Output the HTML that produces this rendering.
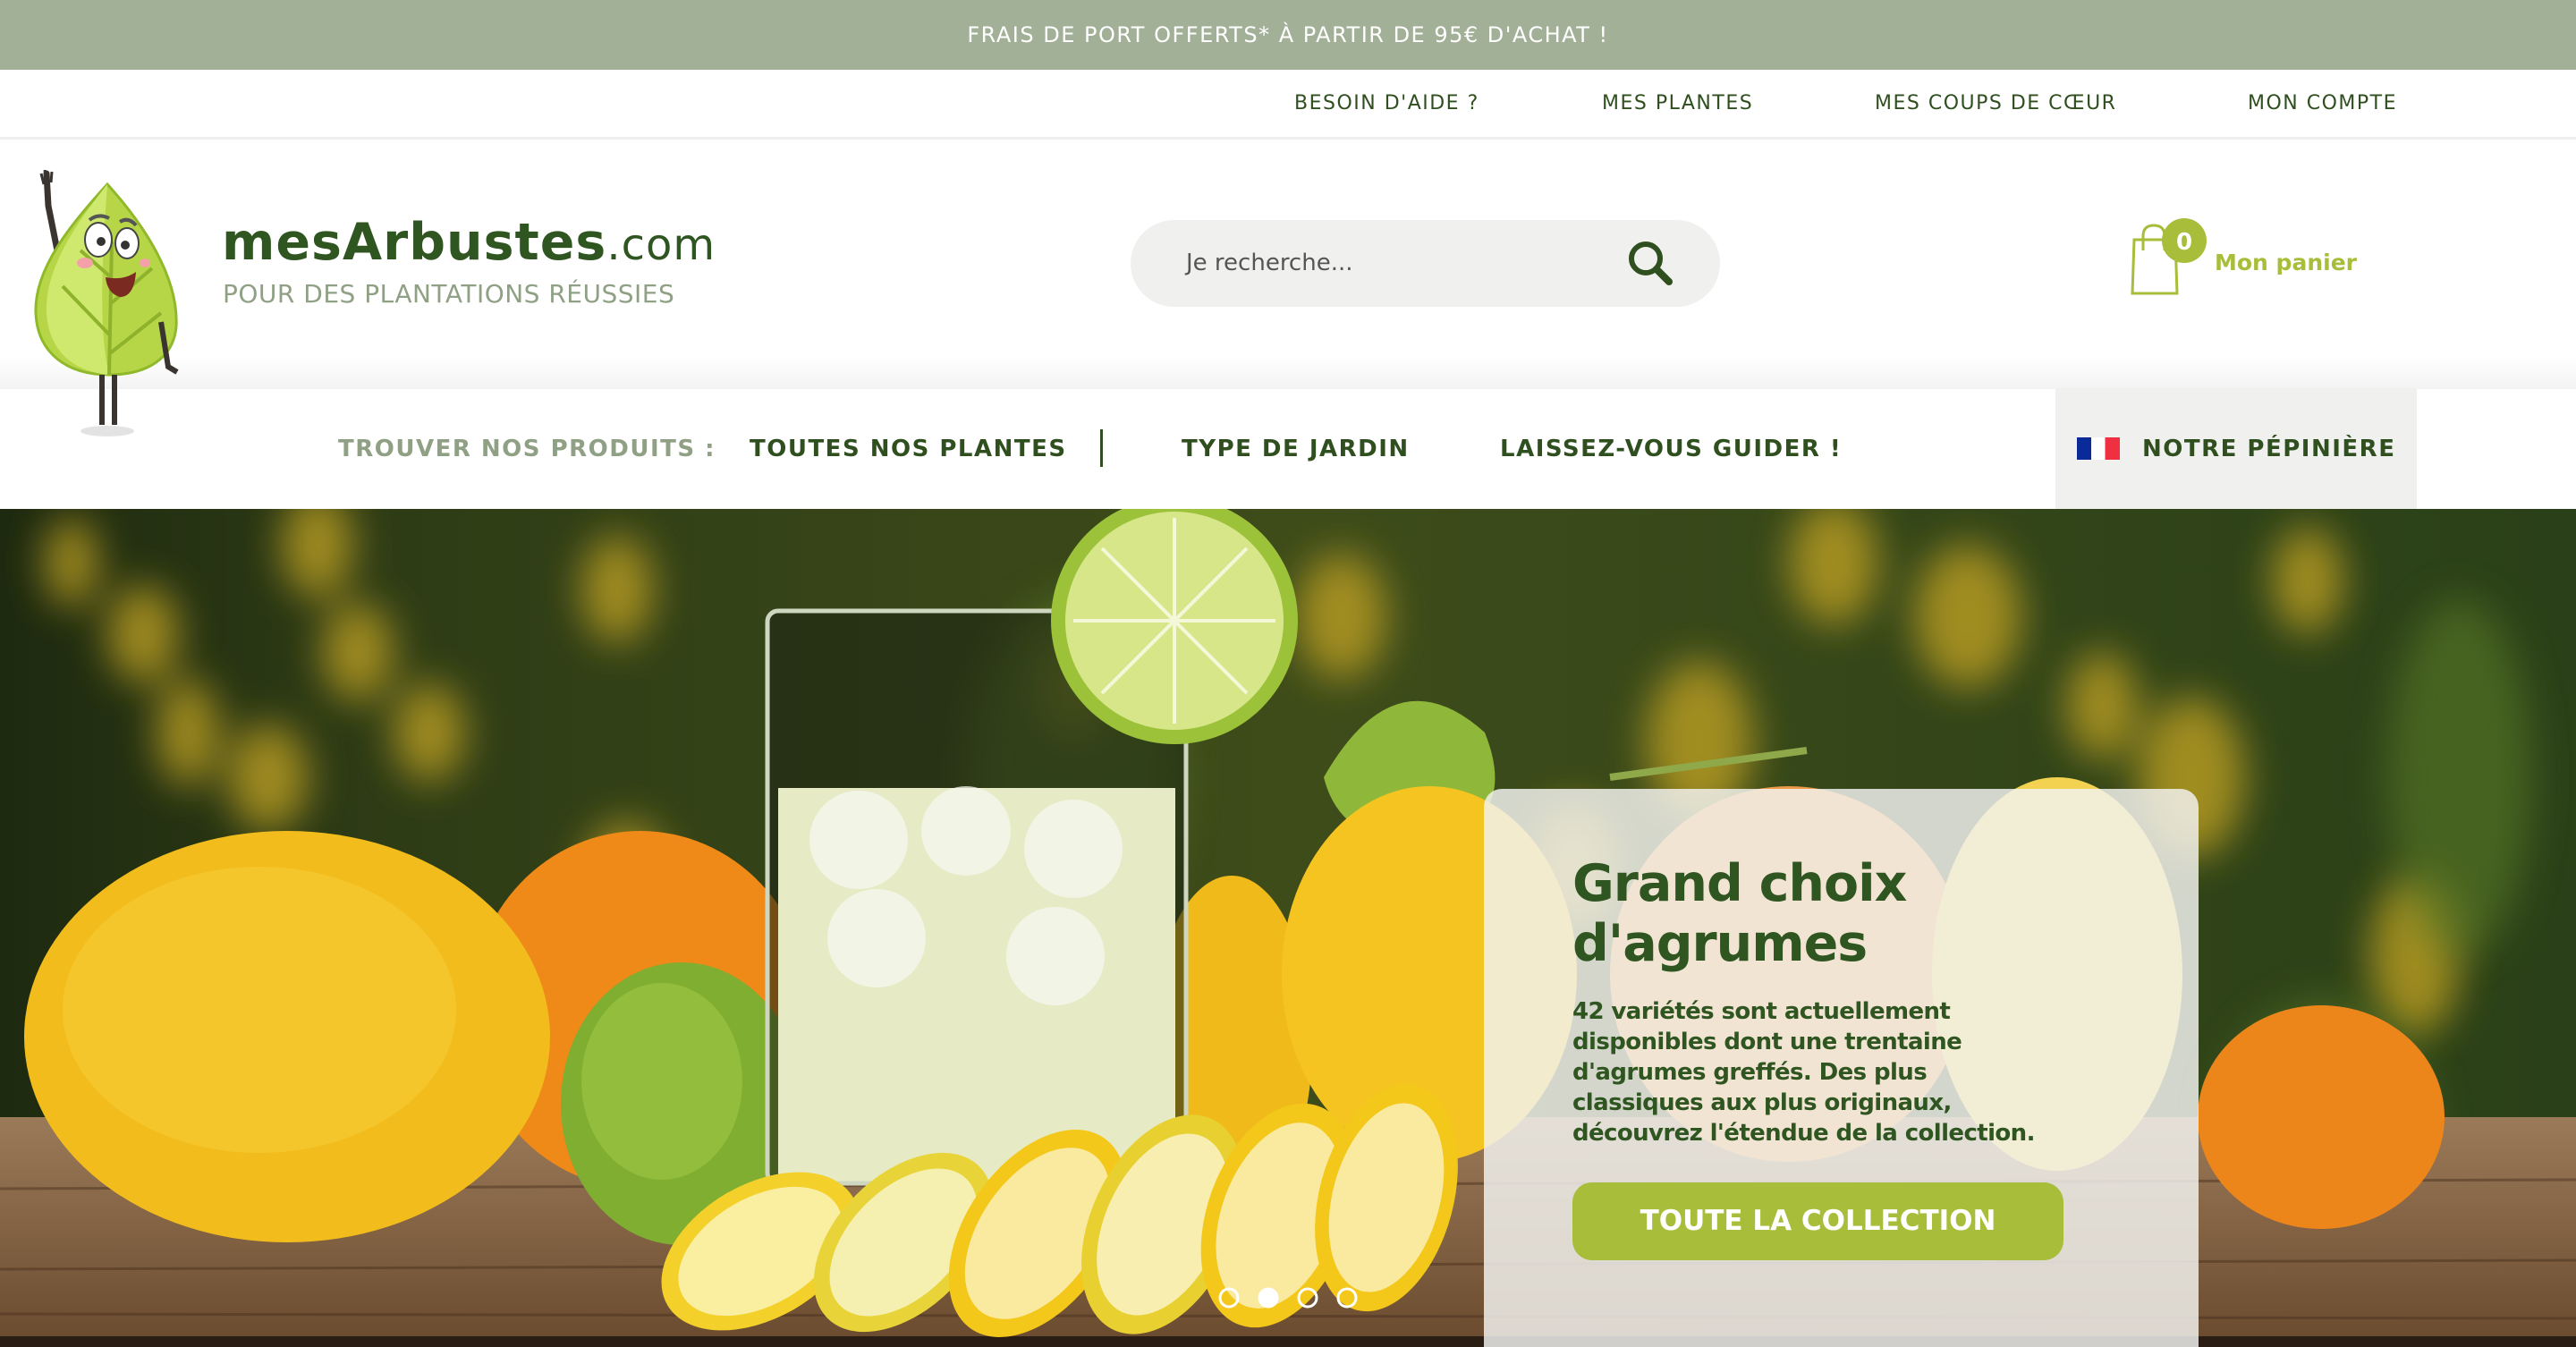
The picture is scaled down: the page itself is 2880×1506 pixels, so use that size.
<!DOCTYPE html>
<html><head><meta charset="utf-8"><style>
*{margin:0;padding:0;box-sizing:border-box}
body{width:2880px;height:1506px;overflow:hidden;background:#fff;font-family:"DejaVu Sans","Liberation Sans",sans-serif;position:relative}
.a{position:absolute;white-space:nowrap}
.topbar{left:0;top:0;width:2880px;height:78px;background:#a3b098;color:#fff;font-size:24px;letter-spacing:1.5px;text-align:center;line-height:78px}
.nav2{top:103px;font-size:22px;letter-spacing:1.5px;color:#2f4f1f}
.line{left:0;top:153px;width:2880px;height:3px;background:#efefef}
.mn{top:487px;font-size:26px;font-weight:bold;color:#2f4f1f;letter-spacing:1.5px}
</style></head><body>
<div class="a topbar">FRAIS DE PORT OFFERTS* À PARTIR DE 95€ D'ACHAT !</div>
<div class="a nav2" style="left:1447px">BESOIN D'AIDE ?</div>
<div class="a nav2" style="left:1791px">MES PLANTES</div>
<div class="a nav2" style="left:2096px">MES COUPS DE CŒUR</div>
<div class="a nav2" style="left:2513px">MON COMPTE</div>
<div class="a line"></div>
<div class="a" style="left:0;top:400px;width:2880px;height:35px;background:linear-gradient(#fff,#f3f3f3)"></div>

<!-- logo mascot -->
<svg class="a" style="left:30px;top:190px" width="200" height="300" viewBox="0 0 200 300">
<ellipse cx="90" cy="292" rx="30" ry="6" fill="#e3e3e3"/>
<path d="M22 4 L24 40 L40 120 L56 150" stroke="#3a3430" stroke-width="7" fill="none" stroke-linecap="round"/>
<path d="M20 0 L22 14 M28 2 L27 14 M16 4 L19 16" stroke="#3a3430" stroke-width="3"/>
<path d="M90 16 C130 60 170 120 167 175 C164 210 135 229 92 229 C45 229 12 205 10 160 C8 110 50 60 90 16 Z" fill="#b6d648" stroke="#8fb92a" stroke-width="3"/>
<path d="M90 16 C55 60 20 110 22 160 C25 205 55 226 92 229 C80 180 84 100 90 16Z" fill="#cfe96e"/>
<path d="M92 229 L95 80 M93 185 L40 130 M93 150 L140 110 M93 205 L150 160 M94 120 L60 90" stroke="#8eb22c" stroke-width="4" fill="none"/>
<path d="M150 170 L158 220 L168 226" stroke="#3a3430" stroke-width="6" fill="none"/>
<path d="M84 229 L84 285 M98 229 L98 285" stroke="#3a3430" stroke-width="6"/>
<ellipse cx="80" cy="78" rx="15" ry="19" fill="#fff" stroke="#444" stroke-width="2"/>
<ellipse cx="112" cy="82" rx="13" ry="17" fill="#fff" stroke="#444" stroke-width="2"/>
<circle cx="83" cy="80" r="5" fill="#333"/><circle cx="110" cy="84" r="5" fill="#333"/>
<ellipse cx="65" cy="104" rx="9" ry="6" fill="#f4a0a8"/><ellipse cx="132" cy="104" rx="6" ry="5" fill="#f4a0a8"/>
<path d="M88 120 Q108 124 122 114 Q120 142 104 142 Q90 138 88 120Z" fill="#7a2a20"/>
<path d="M70 56 Q80 48 92 54 M104 58 Q114 52 122 62" stroke="#555" stroke-width="4" fill="none"/>
</svg>
<div class="a" style="left:248px;top:238px;font-size:57px;font-weight:bold;color:#2f5520;letter-spacing:1px">mesArbustes<span style="font-weight:normal;font-size:48px">.com</span></div>
<div class="a" style="left:249px;top:312px;font-size:28px;color:#8fa085;letter-spacing:0.5px">POUR DES PLANTATIONS RÉUSSIES</div>

<!-- search -->
<div class="a" style="left:1264px;top:246px;width:659px;height:97px;border-radius:49px;background:#f0f1ee"></div>
<div class="a" style="left:1326px;top:279px;font-size:26px;color:#555">Je recherche...</div>
<svg class="a" style="left:1816px;top:265px" width="58" height="58" viewBox="0 0 58 58"><circle cx="24" cy="24" r="16" stroke="#2f4f1f" stroke-width="6" fill="none"/><path d="M36 36 L50 50" stroke="#2f4f1f" stroke-width="8" stroke-linecap="round"/></svg>

<!-- cart -->
<svg class="a" style="left:2380px;top:240px" width="100" height="100" viewBox="0 0 100 100">
<path d="M6 28 L4 88 L54 88 L52 28 Z" fill="none" stroke="#a8bd3a" stroke-width="3"/>
<path d="M16 40 L16 24 Q16 12 28 12 Q40 12 40 24 L40 40" fill="none" stroke="#a8bd3a" stroke-width="3"/>
<circle cx="62" cy="29" r="25" fill="#a8bd3a"/>
<text x="62" y="39" font-size="26" font-weight="bold" fill="#fff" text-anchor="middle" font-family="DejaVu Sans">0</text>
</svg>
<div class="a" style="left:2476px;top:279px;font-size:25px;font-weight:bold;color:#a8bd3a">Mon panier</div>

<!-- main nav -->
<div class="a mn" style="left:378px;color:#8fa085">TROUVER NOS PRODUITS :</div>
<div class="a mn" style="left:838px">TOUTES NOS PLANTES</div>
<div class="a" style="left:1230px;top:480px;width:3px;height:42px;background:#2f4f1f"></div>
<div class="a mn" style="left:1321px">TYPE DE JARDIN</div>
<div class="a mn" style="left:1677px">LAISSEZ-VOUS GUIDER !</div>
<div class="a" style="left:2298px;top:434px;width:404px;height:135px;background:#f0f1ef"></div>
<div class="a" style="left:2322px;top:489px;width:48px;height:25px;background:linear-gradient(90deg,#0a2a9a 33%,#fff 33%,#fff 66%,#f03040 66%)"></div>
<div class="a mn" style="left:2395px">NOTRE PÉPINIÈRE</div>

<!-- hero -->
<svg class="a" style="left:0;top:569px" width="2880" height="937" viewBox="0 0 2880 937">
<defs>
<filter id="b"><feGaussianBlur stdDeviation="22"/></filter>
<linearGradient id="tbl" x1="0" y1="0" x2="0" y2="1"><stop offset="0" stop-color="#9a7a58"/><stop offset="1" stop-color="#6a4a2e"/></linearGradient>
<linearGradient id="bg" x1="0" y1="0" x2="1" y2="0"><stop offset="0" stop-color="#1e2a10"/><stop offset=".15" stop-color="#2e3c16"/><stop offset=".5" stop-color="#3e4c1a"/><stop offset="1" stop-color="#2a4018"/></linearGradient>
</defs>
<rect width="2880" height="937" fill="url(#bg)"/>
<g filter="url(#b)" fill="#b49a22" opacity=".85">
<ellipse cx="80" cy="60" rx="30" ry="50"/><ellipse cx="160" cy="140" rx="40" ry="55"/><ellipse cx="300" cy="300" rx="45" ry="60"/><ellipse cx="355" cy="40" rx="40" ry="60"/>
<ellipse cx="210" cy="250" rx="35" ry="60"/><ellipse cx="400" cy="160" rx="40" ry="55"/><ellipse cx="480" cy="250" rx="40" ry="55"/>
<ellipse cx="700" cy="420" rx="50" ry="70"/><ellipse cx="200" cy="520" rx="50" ry="70"/><ellipse cx="1500" cy="120" rx="50" ry="70"/>
<ellipse cx="1900" cy="260" rx="60" ry="90"/><ellipse cx="2200" cy="120" rx="60" ry="80"/><ellipse cx="2450" cy="300" rx="60" ry="90"/>
<ellipse cx="2700" cy="500" rx="50" ry="90"/><ellipse cx="1950" cy="560" rx="50" ry="80"/><ellipse cx="2580" cy="80" rx="40" ry="60"/>
<ellipse cx="690" cy="90" rx="40" ry="60"/><ellipse cx="1760" cy="400" rx="50" ry="70"/><ellipse cx="1200" cy="200" rx="40" ry="60"/>
<ellipse cx="2050" cy="60" rx="50" ry="70"/><ellipse cx="2350" cy="220" rx="40" ry="60"/>
</g>
<g filter="url(#b)" fill="#5a7a28" opacity=".6"><ellipse cx="1200" cy="300" rx="120" ry="200"/><ellipse cx="2600" cy="700" rx="120" ry="150"/><ellipse cx="2750" cy="300" rx="80" ry="200"/></g>
<rect y="680" width="2880" height="257" fill="url(#tbl)"/>
<g stroke="#4a3220" stroke-width="3" opacity=".5"><path d="M0 760 L2880 750 M0 850 L2880 840 M0 900 L2880 905"/></g>
<rect y="925" width="2880" height="12" fill="#2a1e14"/>
<!-- leaves -->
<path d="M1480 300 Q1560 160 1660 250 Q1700 350 1600 370 Q1500 380 1480 300Z" fill="#8fb83a"/>
<path d="M1800 300 L2020 270" stroke="#8fa84a" stroke-width="8"/>
<!-- back lemons -->
<ellipse cx="1377" cy="600" rx="90" ry="190" fill="#f0bb1a"/>
<ellipse cx="1598" cy="520" rx="165" ry="210" fill="#f5c420"/>
<ellipse cx="716" cy="560" rx="190" ry="200" fill="#ef8a18"/>
<ellipse cx="321" cy="590" rx="294" ry="230" fill="#f2bd1c"/>
<ellipse cx="290" cy="560" rx="220" ry="160" fill="#f7cf3a" opacity=".5"/>
<ellipse cx="762" cy="665" rx="135" ry="158" fill="#7fae30"/>
<ellipse cx="740" cy="640" rx="90" ry="110" fill="#a8cc48" opacity=".5"/>
<ellipse cx="2000" cy="520" rx="200" ry="210" fill="#ec9a48"/>
<ellipse cx="2300" cy="520" rx="140" ry="220" fill="#f2d250"/>
<ellipse cx="2595" cy="680" rx="138" ry="125" fill="#ec861a"/>
<!-- glass -->
<rect x="858" y="114" width="468" height="640" rx="12" fill="#1e2614" opacity=".6"/>
<rect x="870" y="312" width="444" height="440" fill="#e6ebc6"/>
<g fill="#f6f7f0" opacity=".75"><circle cx="960" cy="370" r="55"/><circle cx="1080" cy="360" r="50"/><circle cx="1200" cy="380" r="55"/><circle cx="980" cy="480" r="55"/><circle cx="1180" cy="500" r="55"/></g>
<rect x="858" y="114" width="468" height="640" rx="12" fill="none" stroke="#cfd6c0" stroke-width="5"/>
<!-- lime slice -->
<circle cx="1313" cy="125" r="138" fill="#9cc23a"/>
<circle cx="1313" cy="125" r="122" fill="#d8e68a"/>
<g stroke="#f4f7d8" stroke-width="4"><path d="M1313 10 L1313 240 M1200 125 L1426 125 M1232 44 L1394 206 M1394 44 L1232 206"/></g>
<!-- lemon slices -->
<g>
<ellipse cx="850" cy="830" rx="120" ry="75" fill="#f3d02a" transform="rotate(-30 850 830)"/><ellipse cx="850" cy="830" rx="100" ry="60" fill="#faeea0" transform="rotate(-30 850 830)"/>
<ellipse cx="1010" cy="820" rx="120" ry="75" fill="#e8d438" transform="rotate(-45 1010 820)"/><ellipse cx="1010" cy="820" rx="100" ry="60" fill="#f6f0b0" transform="rotate(-45 1010 820)"/>
<ellipse cx="1160" cy="810" rx="130" ry="80" fill="#f3c81a" transform="rotate(-55 1160 810)"/><ellipse cx="1160" cy="810" rx="108" ry="64" fill="#faeaa0" transform="rotate(-55 1160 810)"/>
<ellipse cx="1300" cy="800" rx="130" ry="80" fill="#e8d030" transform="rotate(-65 1300 800)"/><ellipse cx="1300" cy="800" rx="108" ry="64" fill="#f8eeb0" transform="rotate(-65 1300 800)"/>
<ellipse cx="1430" cy="790" rx="130" ry="80" fill="#f3c81a" transform="rotate(-70 1430 790)"/><ellipse cx="1430" cy="790" rx="108" ry="64" fill="#faeaa0" transform="rotate(-70 1430 790)"/>
<ellipse cx="1550" cy="770" rx="130" ry="75" fill="#f3c81a" transform="rotate(-75 1550 770)"/><ellipse cx="1550" cy="770" rx="108" ry="60" fill="#faeaa0" transform="rotate(-75 1550 770)"/>
</g>
<!-- card -->
<rect x="1659" y="313" width="799" height="660" rx="20" fill="#f2f2ee" opacity=".84"/>
<!-- dots -->
<g stroke="#fff" stroke-width="3" fill="none"><circle cx="1374" cy="882" r="10"/><circle cx="1418" cy="882" r="10" fill="#fff"/><circle cx="1462" cy="882" r="10"/><circle cx="1506" cy="882" r="10"/></g>
</svg>
<div class="a" style="left:1758px;top:955px;font-size:57px;font-weight:bold;color:#2f5520;line-height:67px;letter-spacing:-1px">Grand choix<br>d'agrumes</div>
<div class="a" style="left:1758px;top:1114px;font-size:26px;font-weight:bold;color:#2f5520;line-height:34px;letter-spacing:-0.6px">42 variétés sont actuellement<br>disponibles dont une trentaine<br>d'agrumes greffés. Des plus<br>classiques aux plus originaux,<br>découvrez l'étendue de la collection.</div>
<div class="a" style="left:1758px;top:1322px;width:549px;height:87px;border-radius:22px;background:#a8bd3a;color:#fff;font-size:31px;font-weight:bold;text-align:center;line-height:87px">TOUTE LA COLLECTION</div>
</body></html>
